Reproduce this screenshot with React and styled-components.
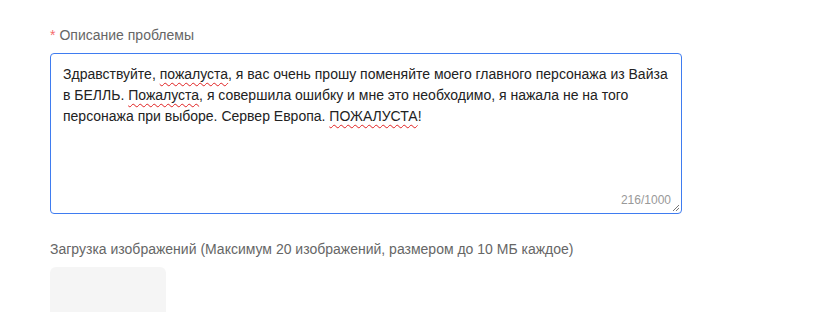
import React from 'react'
import styled, { createGlobalStyle } from 'styled-components'

const GlobalStyle = createGlobalStyle`
  body {
    margin: 0;
    background: #fff;
    font-family: "Liberation Sans", Arial, sans-serif;
  }
`

const Page = styled.div`
  padding: 25px 0 0 50px;
  width: 632px;
`

const Field = styled.div`
  display: flex;
  flex-direction: column;
  margin-bottom: ${p => p.$gap || 0}px;
`

const Label = styled.div`
  font-size: 14px;
  line-height: 20px;
  color: #666;
  margin-bottom: 8px;
`

const Star = styled.span`
  color: #f56c6c;
  margin-right: 4px;
`

const Box = styled.div`
  position: relative;
  height: 161px;
  box-sizing: border-box;
  border: 1px solid #3f7cf0;
  border-radius: 4px;
  padding: 10px 12px;
  font-size: 14px;
  line-height: 21px;
  color: #222;
`

const Typo = styled.span`
  text-decoration: underline wavy #e02020;
  text-decoration-thickness: 1px;
  text-underline-offset: 3px;
`

const Counter = styled.span`
  position: absolute;
  right: 10px;
  bottom: 2px;
  font-size: 12px;
  color: #999;
`

const Grip = styled.svg`
  position: absolute;
  right: 1px;
  bottom: 1px;
`

const UploadTile = styled.div`
  width: 116px;
  height: 60px;
  background: #f5f5f5;
  border-radius: 6px;
`

export default function App() {
  return (
    <>
      <GlobalStyle />
      <Page>
        <Field $gap={25}>
          <Label><Star>*</Star>Описание проблемы</Label>
          <Box>
            Здравствуйте, <Typo>пожалуста</Typo>, я вас очень прошу поменяйте моего главного персонажа из Вайза
            в БЕЛЛЬ. <Typo>Пожалуста</Typo>, я совершила ошибку и мне это необходимо, я нажала не на того
            персонажа при выборе. Сервер Европа. <Typo>ПОЖАЛУСТА</Typo>!
            <Counter>216/1000</Counter>
            <Grip width="8" height="8" viewBox="0 0 8 8">
              <path d="M7 1 L1 7 M7 4 L4 7" stroke="#777" strokeWidth="1" fill="none" />
            </Grip>
          </Box>
        </Field>
        <Field>
          <Label>Загрузка изображений (Максимум 20 изображений, размером до 10 МБ каждое)</Label>
          <UploadTile />
        </Field>
      </Page>
    </>
  )
}
